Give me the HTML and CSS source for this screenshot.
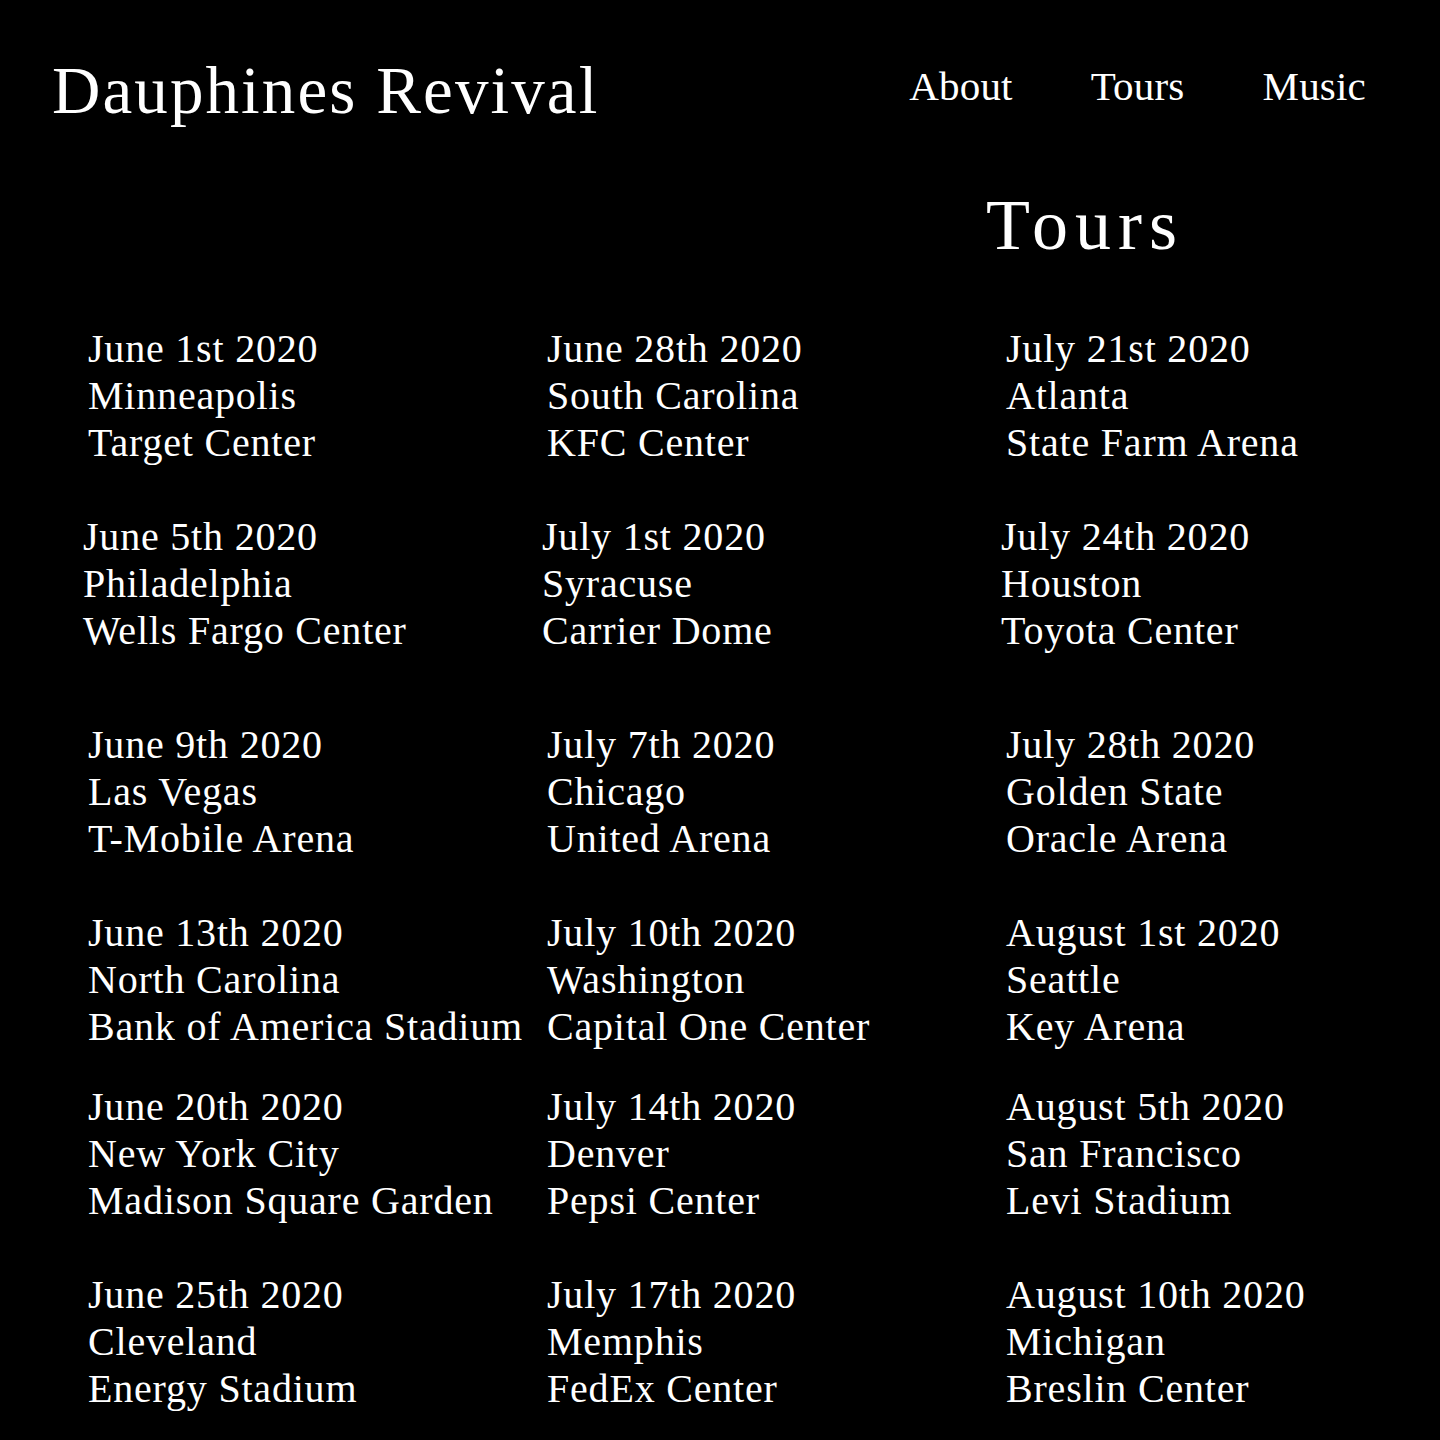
FILE: index.html
```html
<!DOCTYPE html>
<html>
<head>
<meta charset="utf-8">
<link rel="stylesheet" href="styles.css">
</head>
<body>
<header class="header">
  <h1 class="brand">Dauphines Revival</h1>
  <nav class="nav">
    <a class="nav-link" href="#">About</a>
    <a class="nav-link" href="#">Tours</a>
    <a class="nav-link" href="#">Music</a>
  </nav>
</header>
<main>
  <h2 class="page-title">Tours</h2>
  <section class="tours">
    <div class="row row-1">
      <div class="show"><div>June 1st 2020</div><div>Minneapolis</div><div>Target Center</div></div>
      <div class="show"><div>June 28th 2020</div><div>South Carolina</div><div>KFC Center</div></div>
      <div class="show"><div>July 21st 2020</div><div>Atlanta</div><div>State Farm Arena</div></div>
    </div>
    <div class="row row-2 shifted">
      <div class="show"><div>June 5th 2020</div><div>Philadelphia</div><div>Wells Fargo Center</div></div>
      <div class="show"><div>July 1st 2020</div><div>Syracuse</div><div>Carrier Dome</div></div>
      <div class="show"><div>July 24th 2020</div><div>Houston</div><div>Toyota Center</div></div>
    </div>
    <div class="row row-3">
      <div class="show"><div>June 9th 2020</div><div>Las Vegas</div><div>T-Mobile Arena</div></div>
      <div class="show"><div>July 7th 2020</div><div>Chicago</div><div>United Arena</div></div>
      <div class="show"><div>July 28th 2020</div><div>Golden State</div><div>Oracle Arena</div></div>
    </div>
    <div class="row row-4">
      <div class="show"><div>June 13th 2020</div><div>North Carolina</div><div>Bank of America Stadium</div></div>
      <div class="show"><div>July 10th 2020</div><div>Washington</div><div>Capital One Center</div></div>
      <div class="show"><div>August 1st 2020</div><div>Seattle</div><div>Key Arena</div></div>
    </div>
    <div class="row row-5">
      <div class="show"><div>June 20th 2020</div><div>New York City</div><div>Madison Square Garden</div></div>
      <div class="show"><div>July 14th 2020</div><div>Denver</div><div>Pepsi Center</div></div>
      <div class="show"><div>August 5th 2020</div><div>San Francisco</div><div>Levi Stadium</div></div>
    </div>
    <div class="row row-6">
      <div class="show"><div>June 25th 2020</div><div>Cleveland</div><div>Energy Stadium</div></div>
      <div class="show"><div>July 17th 2020</div><div>Memphis</div><div>FedEx Center</div></div>
      <div class="show"><div>August 10th 2020</div><div>Michigan</div><div>Breslin Center</div></div>
    </div>
  </section>
</main>
</body>
</html>
```

FILE: styles.css
```css
html, body {
  margin: 0;
  padding: 0;
  background: #000;
  color: #fff;
  font-family: "Liberation Serif", "Times New Roman", serif;
}

.header {
  display: flex;
  justify-content: space-between;
  align-items: flex-start;
  padding: 0 74px 0 52px;
  height: 150px;
}

.brand {
  margin: 0;
  padding-top: 50px;
  font-size: 67px;
  font-weight: normal;
  line-height: 80px;
  letter-spacing: 2.1px;
}

.nav {
  display: flex;
  gap: 78px;
  padding-top: 62px;
}

.nav-link {
  color: #fff;
  text-decoration: none;
  font-size: 41px;
  line-height: 48px;
  letter-spacing: 0.2px;
}

.page-title {
  margin: 0;
  padding-left: 986px;
  padding-top: 32px;
  font-size: 72px;
  font-weight: normal;
  line-height: 86px;
  letter-spacing: 7px;
}

.tours {
  padding-top: 57px;
}

.row {
  display: grid;
  grid-template-columns: 459px 459px 459px;
  padding-left: 88px;
  font-size: 40px;
  line-height: 47px;
  letter-spacing: 0.8px;
}

.row.shifted {
  padding-left: 83px;
}

.row-2 { margin-top: 47px; }
.row-3 { margin-top: 67px; }
.row-4 { margin-top: 47px; }
.row-5 { margin-top: 33px; }
.row-6 { margin-top: 47px; }

.show {
  white-space: nowrap;
}
```
